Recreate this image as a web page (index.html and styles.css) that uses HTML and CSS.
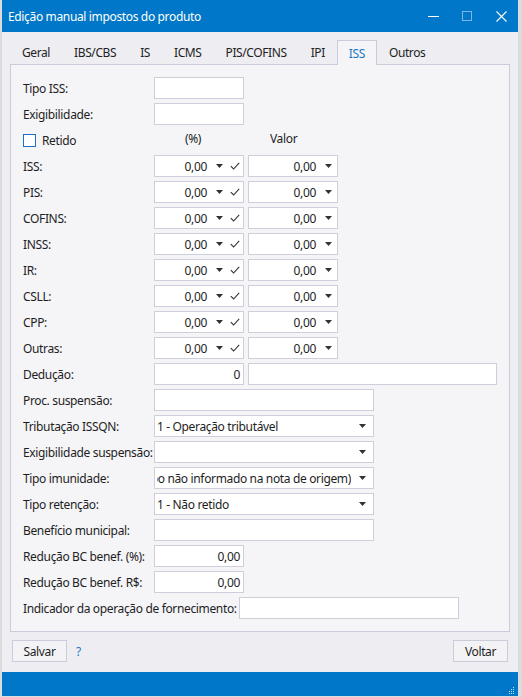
FILE: index.html
```html
<!DOCTYPE html>
<html lang="pt-BR">
<head>
<meta charset="utf-8">
<title>Edição manual impostos do produto</title>
<link rel="stylesheet" href="styles.css">
</head>
<body>
<div class="window">
  <div class="titlebar">
    <span class="title">Edição manual impostos do produto</span>
    <div class="controls">
      <span class="ctrl"><svg width="11" height="11" viewBox="0 0 11 11"><line x1="0" y1="5.5" x2="11" y2="5.5" stroke="#fff" stroke-width="1"/></svg></span>
      <span class="ctrl"><svg width="11" height="11" viewBox="0 0 11 11"><rect x="0.5" y="0.5" width="9" height="9" fill="none" stroke="#7fb5e6" stroke-width="1"/></svg></span>
      <span class="ctrl"><svg width="11" height="11" viewBox="0 0 11 11"><path d="M0.5 0.5 L10.5 10.5 M10.5 0.5 L0.5 10.5" stroke="#fff" stroke-width="1.1"/></svg></span>
    </div>
  </div>
  <div class="content">
    <div class="tabs">
      <span class="tab">Geral</span>
      <span class="tab">IBS/CBS</span>
      <span class="tab">IS</span>
      <span class="tab">ICMS</span>
      <span class="tab">PIS/COFINS</span>
      <span class="tab">IPI</span>
      <span class="tab active">ISS</span>
      <span class="tab">Outros</span>
    </div>
    <div class="panel">
      <div class="row"><span class="label">Tipo ISS:</span><span class="field w90"></span></div>
      <div class="row"><span class="label">Exigibilidade:</span><span class="field w90"></span></div>
      <div class="row">
        <span class="label check-label"><span class="checkbox"></span>Retido</span>
        <span class="colhead pct">(%)</span>
        <span class="colhead val">Valor</span>
      </div>

      <div class="row"><span class="label">ISS:</span><span class="field w90 combo"><span class="value">0,00</span><svg class="arrow" width="7" height="4" viewBox="0 0 7 4"><path d="M0 0 H7 L3.5 4 Z" fill="#333"/></svg><svg class="tick" width="10" height="8" viewBox="0 0 10 8"><path d="M0.8 4.2 L3.6 7 L9.2 0.8" fill="none" stroke="#333" stroke-width="1.1"/></svg></span><span class="field w90 combo"><span class="value">0,00</span><svg class="arrow end" width="7" height="4" viewBox="0 0 7 4"><path d="M0 0 H7 L3.5 4 Z" fill="#333"/></svg></span></div>
      <div class="row"><span class="label">PIS:</span><span class="field w90 combo"><span class="value">0,00</span><svg class="arrow" width="7" height="4" viewBox="0 0 7 4"><path d="M0 0 H7 L3.5 4 Z" fill="#333"/></svg><svg class="tick" width="10" height="8" viewBox="0 0 10 8"><path d="M0.8 4.2 L3.6 7 L9.2 0.8" fill="none" stroke="#333" stroke-width="1.1"/></svg></span><span class="field w90 combo"><span class="value">0,00</span><svg class="arrow end" width="7" height="4" viewBox="0 0 7 4"><path d="M0 0 H7 L3.5 4 Z" fill="#333"/></svg></span></div>
      <div class="row"><span class="label">COFINS:</span><span class="field w90 combo"><span class="value">0,00</span><svg class="arrow" width="7" height="4" viewBox="0 0 7 4"><path d="M0 0 H7 L3.5 4 Z" fill="#333"/></svg><svg class="tick" width="10" height="8" viewBox="0 0 10 8"><path d="M0.8 4.2 L3.6 7 L9.2 0.8" fill="none" stroke="#333" stroke-width="1.1"/></svg></span><span class="field w90 combo"><span class="value">0,00</span><svg class="arrow end" width="7" height="4" viewBox="0 0 7 4"><path d="M0 0 H7 L3.5 4 Z" fill="#333"/></svg></span></div>
      <div class="row"><span class="label">INSS:</span><span class="field w90 combo"><span class="value">0,00</span><svg class="arrow" width="7" height="4" viewBox="0 0 7 4"><path d="M0 0 H7 L3.5 4 Z" fill="#333"/></svg><svg class="tick" width="10" height="8" viewBox="0 0 10 8"><path d="M0.8 4.2 L3.6 7 L9.2 0.8" fill="none" stroke="#333" stroke-width="1.1"/></svg></span><span class="field w90 combo"><span class="value">0,00</span><svg class="arrow end" width="7" height="4" viewBox="0 0 7 4"><path d="M0 0 H7 L3.5 4 Z" fill="#333"/></svg></span></div>
      <div class="row"><span class="label">IR:</span><span class="field w90 combo"><span class="value">0,00</span><svg class="arrow" width="7" height="4" viewBox="0 0 7 4"><path d="M0 0 H7 L3.5 4 Z" fill="#333"/></svg><svg class="tick" width="10" height="8" viewBox="0 0 10 8"><path d="M0.8 4.2 L3.6 7 L9.2 0.8" fill="none" stroke="#333" stroke-width="1.1"/></svg></span><span class="field w90 combo"><span class="value">0,00</span><svg class="arrow end" width="7" height="4" viewBox="0 0 7 4"><path d="M0 0 H7 L3.5 4 Z" fill="#333"/></svg></span></div>
      <div class="row"><span class="label">CSLL:</span><span class="field w90 combo"><span class="value">0,00</span><svg class="arrow" width="7" height="4" viewBox="0 0 7 4"><path d="M0 0 H7 L3.5 4 Z" fill="#333"/></svg><svg class="tick" width="10" height="8" viewBox="0 0 10 8"><path d="M0.8 4.2 L3.6 7 L9.2 0.8" fill="none" stroke="#333" stroke-width="1.1"/></svg></span><span class="field w90 combo"><span class="value">0,00</span><svg class="arrow end" width="7" height="4" viewBox="0 0 7 4"><path d="M0 0 H7 L3.5 4 Z" fill="#333"/></svg></span></div>
      <div class="row"><span class="label">CPP:</span><span class="field w90 combo"><span class="value">0,00</span><svg class="arrow" width="7" height="4" viewBox="0 0 7 4"><path d="M0 0 H7 L3.5 4 Z" fill="#333"/></svg><svg class="tick" width="10" height="8" viewBox="0 0 10 8"><path d="M0.8 4.2 L3.6 7 L9.2 0.8" fill="none" stroke="#333" stroke-width="1.1"/></svg></span><span class="field w90 combo"><span class="value">0,00</span><svg class="arrow end" width="7" height="4" viewBox="0 0 7 4"><path d="M0 0 H7 L3.5 4 Z" fill="#333"/></svg></span></div>
      <div class="row"><span class="label">Outras:</span><span class="field w90 combo"><span class="value">0,00</span><svg class="arrow" width="7" height="4" viewBox="0 0 7 4"><path d="M0 0 H7 L3.5 4 Z" fill="#333"/></svg><svg class="tick" width="10" height="8" viewBox="0 0 10 8"><path d="M0.8 4.2 L3.6 7 L9.2 0.8" fill="none" stroke="#333" stroke-width="1.1"/></svg></span><span class="field w90 combo"><span class="value">0,00</span><svg class="arrow end" width="7" height="4" viewBox="0 0 7 4"><path d="M0 0 H7 L3.5 4 Z" fill="#333"/></svg></span></div>

      <div class="row"><span class="label">Dedução:</span><span class="field w90 num"><span class="value">0</span></span><span class="field w249"></span></div>
      <div class="row"><span class="label">Proc. suspensão:</span><span class="field w220"></span></div>
      <div class="row"><span class="label">Tributação ISSQN:</span><span class="field w220 select"><span class="text">1 - Operação tributável</span><svg class="arrow" width="7" height="4" viewBox="0 0 7 4"><path d="M0 0 H7 L3.5 4 Z" fill="#333"/></svg></span></div>
      <div class="row"><span class="label">Exigibilidade suspensão:</span><span class="field w220 select"><span class="text"></span><svg class="arrow" width="7" height="4" viewBox="0 0 7 4"><path d="M0 0 H7 L3.5 4 Z" fill="#333"/></svg></span></div>
      <div class="row"><span class="label">Tipo imunidade:</span><span class="field w220 select"><span class="text scrolled"><span>po não informado na nota de origem)</span></span><svg class="arrow" width="7" height="4" viewBox="0 0 7 4"><path d="M0 0 H7 L3.5 4 Z" fill="#333"/></svg></span></div>
      <div class="row"><span class="label">Tipo retenção:</span><span class="field w220 select"><span class="text">1 - Não retido</span><svg class="arrow" width="7" height="4" viewBox="0 0 7 4"><path d="M0 0 H7 L3.5 4 Z" fill="#333"/></svg></span></div>
      <div class="row"><span class="label">Benefício municipal:</span><span class="field w220"></span></div>
      <div class="row"><span class="label">Redução BC benef. (%):</span><span class="field w90 num"><span class="value">0,00</span></span></div>
      <div class="row"><span class="label">Redução BC benef. R$:</span><span class="field w90 num"><span class="value">0,00</span></span></div>
      <div class="row free"><span class="label auto">Indicador da operação de fornecimento:</span><span class="field w220"></span></div>
    </div>
    <div class="footer">
      <span class="btn">Salvar</span>
      <span class="help">?</span>
      <span class="spacer"></span>
      <span class="btn">Voltar</span>
    </div>
  </div>
  <div class="statusbar">
    <svg class="grip" width="7" height="7" viewBox="0 0 7 7" fill="#cfe3f5"><rect x="5" y="0" width="1" height="1"/><rect x="3" y="2" width="1" height="1"/><rect x="5" y="2" width="1" height="1"/><rect x="1" y="4" width="1" height="1"/><rect x="3" y="4" width="1" height="1"/><rect x="5" y="4" width="1" height="1"/><rect x="1" y="6" width="1" height="1"/><rect x="3" y="6" width="1" height="1"/><rect x="5" y="6" width="1" height="1"/></svg>
  </div>
</div>
</body>
</html>
```

FILE: styles.css
```css
* { box-sizing: border-box; }
html, body { margin: 0; padding: 0; }
body {
  width: 522px;
  height: 697px;
  background: #dcdcdc;
  font-family: "Noto Sans", "Open Sans", sans-serif;
  font-size: 12px;
  letter-spacing: -0.35px;
  color: #1e1e1e;
  overflow: hidden;
}
.window {
  width: 522px;
  height: 697px;
  display: flex;
  flex-direction: column;
  border-left: 2px solid #dcdcdc;
  border-right: 4px solid #dcdcdc;
  border-bottom: 1px solid #dcdcdc;
  background: #eeeef2;
}
.titlebar {
  height: 32px;
  flex: none;
  background: #0077c8;
  color: #fff;
  display: flex;
  align-items: center;
  padding-left: 6px;
}
.title { font-size: 12px; flex: 1; letter-spacing: -0.35px; }
.controls { display: flex; height: 100%; }
.ctrl {
  width: 34px;
  display: flex;
  align-items: center;
  justify-content: center;
}
.ctrl svg { display: block; }
.content {
  flex: 1;
  padding: 8px 8px 0 8px;
  display: flex;
  flex-direction: column;
}
.tabs {
  display: flex;
  height: 24px;
  flex: none;
  position: relative;
  z-index: 1;
}
.tab {
  padding: 0 12px;
  display: flex;
  align-items: center;
  letter-spacing: -0.4px;
  color: #222;
}
.tab.active {
  padding: 0 11px;
  background: #f5f5f8;
  border: 1px solid #cbcbda;
  border-bottom: none;
  color: #1a78c8;
  height: 25px;
}
.panel {
  height: 568px;
  flex: none;
  background: #f5f5f8;
  border: 1px solid #cbcbda;
  padding: 12px 0 0 12px;
  display: flex;
  flex-direction: column;
  gap: 4px;
}
.row {
  display: flex;
  align-items: center;
  height: 22px;
  gap: 4px;
}
.label {
  width: 127px;
  flex: none;
  white-space: nowrap;
}
.label.auto { width: auto; margin-right: -2px; }
.check-label { display: flex; align-items: center; }
.checkbox {
  width: 13px;
  height: 13px;
  border: 1px solid #1f6fc5;
  background: #fff;
  margin-right: 6px;
}
.colhead { width: 90px; flex: none; }
.colhead.pct { padding-left: 31px; margin-top: -3px; }
.colhead.val { padding-left: 22px; margin-top: -3px; }
.field {
  height: 22px;
  flex: none;
  background: #fff;
  border: 1px solid #cfcfdc;
  display: flex;
  align-items: center;
  overflow: hidden;
}
.w90 { width: 90px; }
.w220 { width: 220px; }
.w249 { width: 249px; }
.value { flex: 1; text-align: right; }
.num .value { padding-right: 3px; }
.combo .arrow { margin-left: 9px; flex: none; }
.combo .tick { margin-left: 7px; margin-right: 3px; flex: none; }
.combo .arrow.end { margin-right: 5px; }
.select { padding-left: 2px; }
.select .text {
  flex: 1;
  white-space: nowrap;
  overflow: hidden;
}
.select .text.scrolled {
  display: flex;
  justify-content: flex-end;
}
.select .text.scrolled span { flex: none; }
.select .arrow { flex: none; margin: 0 7px 0 8px; }
.footer {
  display: flex;
  align-items: center;
  height: 22px;
  margin-top: 8px;
  padding: 0 2px;
}
.btn {
  width: 55px;
  height: 22px;
  border: 1px solid #cbcbda;
  background: #f3f3f6;
  display: flex;
  align-items: center;
  justify-content: center;
}
.help { color: #1a78c8; margin-left: 9px; }
.spacer { flex: 1; }
.statusbar {
  height: 24px;
  flex: none;
  margin-top: auto;
  background: #0077c8;
  position: relative;
}
.grip { position: absolute; right: 3px; bottom: 2px; }
```
